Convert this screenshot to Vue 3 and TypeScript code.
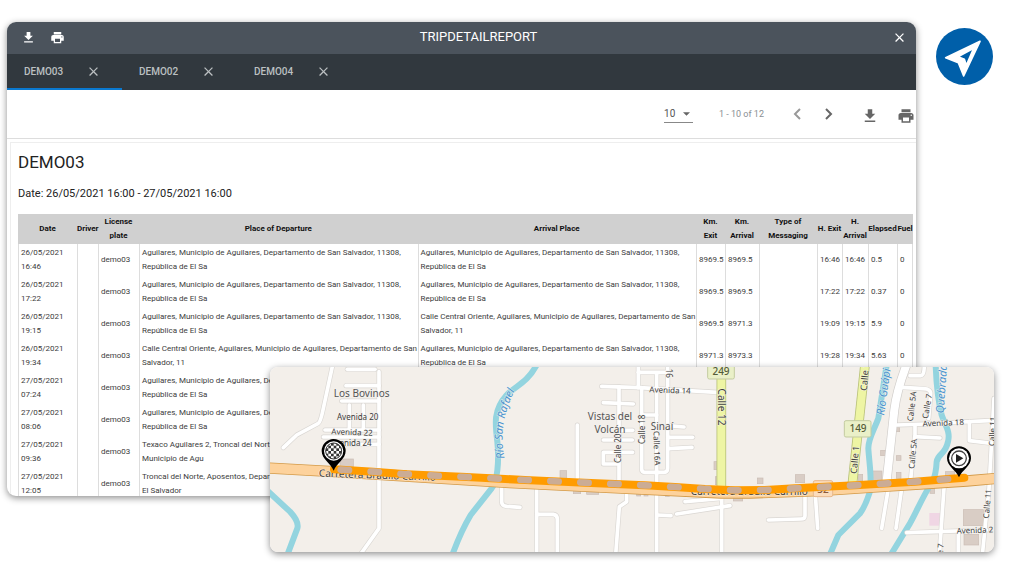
<script setup lang="ts">
import { ref } from 'vue'

interface Trip {
  date: string
  from: string
  to: string
  kmExit: string
  kmArrival: string
  exit: string
  arrival: string
  elapsed: string
}

const tabs = ['DEMO03', 'DEMO02', 'DEMO04']
const active = ref('DEMO03')
const pageSize = ref('10')

const home = 'Aguilares, Municipio de Aguilares, Departamento de San Salvador, 11308, República de El Sa'
const central = 'Calle Central Oriente, Aguilares, Municipio de Aguilares, Departamento de San Salvador, 11'

const trips: Trip[] = [
  { date: '26/05/2021 16:46', from: home, to: home, kmExit: '8969.5', kmArrival: '8969.5', exit: '16:46', arrival: '16:46', elapsed: '0.5' },
  { date: '26/05/2021 17:22', from: home, to: home, kmExit: '8969.5', kmArrival: '8969.5', exit: '17:22', arrival: '17:22', elapsed: '0.37' },
  { date: '26/05/2021 19:15', from: home, to: central, kmExit: '8969.5', kmArrival: '8971.3', exit: '19:09', arrival: '19:15', elapsed: '5.9' },
  { date: '26/05/2021 19:34', from: central, to: home, kmExit: '8971.3', kmArrival: '8973.3', exit: '19:28', arrival: '19:34', elapsed: '5.63' },
  { date: '27/05/2021 07:24', from: home, to: '', kmExit: '', kmArrival: '', exit: '', arrival: '', elapsed: '' },
  { date: '27/05/2021 08:06', from: home, to: '', kmExit: '', kmArrival: '', exit: '', arrival: '', elapsed: '' },
  { date: '27/05/2021 09:36', from: 'Texaco Aguilares 2, Troncal del Norte, Aguilares, San Salvador, 11308, Municipio de Agu', to: '', kmExit: '', kmArrival: '', exit: '', arrival: '', elapsed: '' },
  { date: '27/05/2021 12:05', from: 'Troncal del Norte, Aposentos, Departamento de San Salvador, República de El\u00a0Salvador', to: '', kmExit: '', kmArrival: '', exit: '', arrival: '', elapsed: '' },
]

const download = 'M19 9h-4V3H9v6H5l7 7 7-7zM5 18v2h14v-2H5z'
const print =
  'M19 8H5c-1.66 0-3 1.34-3 3v6h4v4h12v-4h4v-6c0-1.66-1.34-3-3-3zm-3 11H8v-5h8v5zm3-7c-.55 0-1-.45-1-1s.45-1 1-1 1 .45 1 1-.45 1-1 1zm-1-9H6v4h12V3z'
const close = 'M19 6.4 17.6 5 12 10.6 6.4 5 5 6.4 10.6 12 5 17.6 6.4 19 12 13.4 17.6 19 19 17.6 13.4 12z'

const streets = [
  'M218 30L190 160Q182 200 175 205L110 240L70 278',
  'M357 50V520L300 600',
  'M262 43H345', 'M258 92H357', 'M245 138H357', 'M268 150V220', 'M310 150V220', 'M195 225H357', 'M190 246H357', 'M240 268H357',
  'M725 390V440Q725 452 740 454L780 457',
  'M952 210V370', 'M830 395V600', 'M830 478H880Q892 480 892 492V600',
  'M1025 94L1140 98L1370 112', 'M1135 30V98', 'M1145 98V342Q1145 352 1155 352H1212Q1223 352 1223 340V30',
  'M1190 55V600', 'M1135 52H1225', 'M1077 95V240', 'M1077 310V385', 'M1030 143L1120 147', 'M1145 180H1190',
  'M1225 212L1272 216', 'M1225 247H1298', 'M1225 281L1296 277', 'M1030 255H1117', 'M1085 226H1118', 'M1118 292H1030V327H1072',
  'M1100 405V440L1078 455L1067 600', 'M1190 480L1233 482', 'M1275 440L1385 430', 'M1250 477L1410 452', 'M1385 420V600',
  'M1925 97L1990 101Q2014 102 2012 118L2006 190', 'M1950 62H1982Q1993 62 1993 30', 'M1910 210L2000 207L2200 196',
  'M1965 210V245L2040 249', 'M1964 245L1952 375', 'M1885 400L1865 520', 'M1925 400L1908 520', 'M2053 385L2038 600',
  'M1940 533L2180 525', 'M2095 530V600', 'M2202 130L2187 400L2167 600', 'M2128 200V257L2195 265',
  'M1665 405L1673 520', 'M1635 420V482Q1635 492 1622 492L1525 495',
]

const rivers = [
  'M20 405L90 470Q118 500 112 520L80 605',
  'M830 30C800 85 770 90 740 120C700 165 705 205 712 260C718 320 712 380 695 400L632 480Q602 530 575 605',
  'M1880 30L1855 190C1840 230 1825 250 1825 280C1828 330 1838 380 1828 415Q1815 455 1800 475L1735 540L1707 605',
  'M2027 30Q2030 120 2045 180C2055 210 2072 230 2064 260C2056 300 2034 295 2030 320Q2028 360 2018 378C1985 430 1970 470 1950 505L1892 600',
]

const calle12 = 'M1384 30V395'
const calle1 = 'M1815 30L1777 388'
const avenue = 'M1943 20C1920 80 1908 120 1903 165L1880 378'
const highway = 'M20 339L220 350L750 383L1100 400L1384 414H1470L1680 407L1860 395L2120 378L2210 370'
const route =
  'M222 343L340 350L440 358L620 366L795 375L975 383L1155 391L1245 396L1335 402L1425 406L1515 405L1605 400L1785 391L1965 380L2055 373L2113 368'
const routeDash =
  'M242 344L340 350L440 358L620 366L795 375L975 383L1155 391L1245 396L1335 402L1425 406L1515 405L1605 400L1785 391L1965 380L2070 372'

const buildings = [
  [240, 312, 40, 24], [900, 347, 20, 30], [940, 400, 22, 16], [980, 402, 36, 16], [1130, 405, 12, 18], [1152, 405, 12, 18], [1216, 410, 12, 14],
  [1362, 320, 10, 24], [1366, 365, 10, 24], [1420, 418, 28, 20], [1492, 369, 17, 17], [1606, 359, 28, 24], [1794, 358, 14, 20],
  [1838, 348, 28, 28], [1862, 286, 16, 16], [1909, 302, 14, 14], [1909, 352, 14, 18], [1909, 218, 10, 12], [2056, 350, 28, 20],
  [2010, 400, 14, 15], [2110, 464, 60, 48], [2112, 538, 44, 32],
]

const labels = [
  { t: 'Los Bovinos', x: 305, y: 126, s: 30, r: 0, c: 'place' },
  { t: 'Avenida 20', x: 293, y: 194, s: 24, r: 0, c: 'street' },
  { t: 'Avenida 22', x: 276, y: 240, s: 24, r: 2, c: 'street' },
  { t: 'Avenida 24', x: 273, y: 274, s: 24, r: 0, c: 'street' },
  { t: 'Vistas del', x: 1050, y: 196, s: 30, r: 0, c: 'place' },
  { t: 'Volcán', x: 1050, y: 234, s: 30, r: 0, c: 'place' },
  { t: 'Sinaí', x: 1206, y: 224, s: 30, r: 0, c: 'place' },
  { t: 'Avenida 14', x: 1230, y: 114, s: 24, r: 2, c: 'street' },
  { t: '16', x: 1217, y: 55, s: 24, r: 90, c: 'street' },
  { t: 'Calle 20', x: 1083, y: 280, s: 24, r: -90, c: 'street' },
  { t: 'Calle 18', x: 1154, y: 223, s: 24, r: -90, c: 'street' },
  { t: 'Calle 16A', x: 1182, y: 280, s: 24, r: 88, c: 'street' },
  { t: 'Calle 12', x: 1375, y: 156, s: 30, r: 90, c: 'street' },
  { t: 'Calle 1', x: 1824, y: 66, s: 27, r: -85, c: 'street' },
  { t: 'Calle 1', x: 1794, y: 315, s: 27, r: -85, c: 'street' },
  { t: 'Calle 5A', x: 1964, y: 155, s: 24, r: -83, c: 'street' },
  { t: 'Calle 7', x: 2010, y: 155, s: 24, r: -80, c: 'street' },
  { t: 'Calle 5A', x: 1967, y: 297, s: 24, r: -85, c: 'street' },
  { t: 'Avenida 18', x: 2050, y: 212, s: 24, r: -2, c: 'street' },
  { t: 'Calle 11', x: 2190, y: 447, s: 24, r: -85, c: 'street' },
  { t: 'Calle 11', x: 2206, y: 230, s: 24, r: -87, c: 'street' },
  { t: 'Avenida 2', x: 2145, y: 534, s: 24, r: -2, c: 'street' },
  { t: 'Calle 7', x: 2048, y: 603, s: 24, r: -85, c: 'street' },
  { t: 'Río Guápi', x: 1882, y: 112, s: 33, r: -82, c: 'water' },
  { t: 'Quebrada', x: 2056, y: 102, s: 33, r: -86, c: 'water' },
]
</script>

<template>
  <main class="page">
    <section class="window">
      <header class="titlebar">
        <button class="icon-btn" aria-label="Download"><svg viewBox="0 0 24 24"><path :d="download" /></svg></button>
        <button class="icon-btn" aria-label="Print"><svg viewBox="0 0 24 24"><path :d="print" /></svg></button>
        <h1>TRIPDETAILREPORT</h1>
        <button class="icon-btn" aria-label="Close"><svg viewBox="0 0 24 24"><path :d="close" /></svg></button>
      </header>

      <nav class="tabs">
        <div v-for="tab in tabs" :key="tab" class="tab" :class="{ active: tab === active }">
          <button class="tab-name" @click="active = tab">{{ tab }}</button>
          <button class="tab-close" :aria-label="'Close ' + tab"><svg viewBox="0 0 24 24"><path :d="close" /></svg></button>
        </div>
      </nav>

      <div class="toolbar">
        <div class="page-size">
          <select v-model="pageSize" aria-label="Rows per page">
            <option>10</option>
            <option>25</option>
          </select>
          <svg viewBox="0 0 8 4"><path d="M0 0h8L4 4z" /></svg>
        </div>
        <span class="range">1 - 10 of 12</span>
        <div class="pagers">
          <button class="pager prev" aria-label="Previous page"><svg viewBox="0 0 10 12"><path d="M7 1 2 6l5 5" /></svg></button>
          <button class="pager" aria-label="Next page"><svg viewBox="0 0 10 12"><path d="M3 1l5 5-5 5" /></svg></button>
        </div>
        <div class="tools">
          <button class="tool" aria-label="Download report"><svg viewBox="0 0 24 24"><path :d="download" /></svg></button>
          <button class="tool" aria-label="Print report"><svg viewBox="0 0 24 24"><path :d="print" /></svg></button>
        </div>
      </div>

      <article class="report">
        <h2>DEMO03</h2>
        <p>Date: 26/05/2021 16:00 - 27/05/2021 16:00</p>
        <table>
          <colgroup>
            <col class="w-date" /><col class="w-driver" /><col class="w-plate" /><col /><col /><col class="w-km" /><col class="w-km2" />
            <col class="w-type" /><col class="w-exit" /><col class="w-arrival" /><col class="w-elapsed" /><col class="w-fuel" />
          </colgroup>
          <thead>
            <tr>
              <th>Date</th>
              <th>Driver</th>
              <th>License<br />plate</th>
              <th>Place of Departure</th>
              <th>Arrival Place</th>
              <th>Km.<br />Exit</th>
              <th>Km.<br />Arrival</th>
              <th>Type of<br />Messaging</th>
              <th>H. Exit</th>
              <th>H.<br />Arrival</th>
              <th>Elapsed</th>
              <th>Fuel</th>
            </tr>
          </thead>
          <tbody>
            <tr v-for="trip in trips" :key="trip.date">
              <td>{{ trip.date }}</td>
              <td></td>
              <td>demo03</td>
              <td>{{ trip.from }}</td>
              <td>{{ trip.to }}</td>
              <td>{{ trip.kmExit }}</td>
              <td>{{ trip.kmArrival }}</td>
              <td></td>
              <td>{{ trip.exit }}</td>
              <td>{{ trip.arrival }}</td>
              <td>{{ trip.elapsed }}</td>
              <td>0</td>
            </tr>
          </tbody>
        </table>
      </article>
    </section>

    <svg class="logo" viewBox="0 0 171 171" role="img" aria-label="Navigation">
      <circle cx="85.500" cy="85.500" r="85.500" fill="#005fa9" />
      <path
        d="M132 40 29 89l38 15 16 40zM113 61 66 86l19 8 6 18z"
        fill="#fff"
        fill-rule="evenodd"
        stroke="#fff"
        stroke-width="5"
        stroke-linejoin="round"
      />
    </svg>

    <div class="map">
      <svg viewBox="30 36 2172 555" preserveAspectRatio="xMidYMid slice" role="img" aria-label="Trip map">
        <defs>
          <pattern id="flag" x="197" y="264" width="16" height="16" patternUnits="userSpaceOnUse">
            <rect width="16" height="16" fill="#fff" />
            <rect width="8" height="8" fill="#333" />
            <rect x="8" y="8" width="8" height="8" fill="#333" />
          </pattern>
          <path id="san-rafael" d="M735 318C722 250 722 190 768 98" />
        </defs>
        <rect x="30" y="36" width="2172" height="555" fill="#f3efea" />
        <rect x="2008" y="474" width="34" height="38" fill="#f0d6e4" />
        <rect v-for="(b, i) in buildings" :key="i" :x="b[0]" :y="b[1]" :width="b[2]" :height="b[3]" class="building" />
        <path v-for="d in rivers" :key="d" :d="d" class="river" />
        <path v-for="d in streets" :key="d" :d="d" class="casing" />
        <path :d="avenue" class="avenue-casing" />
        <path v-for="d in streets" :key="d" :d="d" class="street-line" />
        <path :d="avenue" class="avenue" />
        <path :d="calle12" class="yellow-casing" /><path :d="calle12" class="yellow" />
        <path :d="calle1" class="yellow-casing" /><path :d="calle1" class="yellow" />
        <path :d="highway" class="highway-casing" /><path :d="highway" class="highway" />
        <rect x="1343" y="24" width="80" height="48" rx="5" class="shield" />
        <rect x="1753" y="197" width="80" height="49" rx="5" class="shield" />
        <rect x="1660" y="377" width="58" height="48" rx="5" class="shield orange" />
        <text x="1383" y="59" class="number">249</text>
        <text x="1794" y="232" class="number">149</text>
        <text x="1689" y="413" class="number brown">32</text>
        <text
          v-for="(l, i) in labels"
          :key="i"
          :class="l.c"
          :font-size="l.s"
          :transform="`translate(${l.x} ${l.y}) rotate(${l.r})`"
        >{{ l.t }}</text>
        <text class="water" font-size="33"><textPath href="#san-rafael" startOffset="50%">Río San Rafael</textPath></text>
        <text class="street" font-size="30" transform="translate(352 371) rotate(2)">Carretera Braulio Carrillo</text>
        <text class="street" font-size="30" transform="translate(1468 420)">Carretera Braulio Carrillo</text>
        <path :d="route" class="route" />
        <path :d="routeDash" class="route-dash" />
        <path d="M221 347C212 325 185 312 185 288a36 36 0 1 1 72 0C257 312 230 325 221 347z" />
        <circle cx="221" cy="288" r="29" fill="#fff" />
        <circle cx="221" cy="288" r="24" fill="url(#flag)" stroke="#333" stroke-width="3" />
        <path d="M2097 367C2088 345 2061 334 2061 310a36 36 0 1 1 72 0C2133 334 2106 345 2097 367z" />
        <circle cx="2097" cy="310" r="30" fill="#fff" />
        <circle cx="2097" cy="310" r="22" fill="#fff" stroke="#444" stroke-width="4" />
        <path d="M2088 297v26l22-13z" fill="#222" />
      </svg>
    </div>
  </main>
</template>

<style>
body {
  margin: 0;
  background: #fff;
}
</style>

<style scoped>
* {
  box-sizing: border-box;
}
.page {
  position: relative;
  display: flex;
  align-items: flex-start;
  gap: 20px;
  height: 100vh;
  padding: 22px 31px 80px 7px;
  overflow: hidden;
  background: #fff;
  font-family: Roboto, 'Liberation Sans', sans-serif;
}
button {
  display: flex;
  align-items: center;
  justify-content: center;
  padding: 0;
  border: 0;
  background: none;
  color: inherit;
  font: inherit;
  cursor: pointer;
}
button svg {
  fill: currentColor;
}
.window {
  flex: 1;
  min-width: 0;
  height: 100%;
  overflow: hidden;
  border-radius: 9px;
  background: #fff;
  box-shadow: 0 2px 7px rgba(0, 0, 0, 0.45);
}
.titlebar {
  display: flex;
  align-items: center;
  height: 32px;
  padding: 0 2px 2px 7px;
  background: #4b535c;
  color: #fff;
}
.icon-btn {
  width: 29px;
  height: 29px;
}
.icon-btn svg {
  width: 15px;
  height: 15px;
}
h1 {
  flex: 1;
  margin: 0;
  font-size: 13px;
  font-weight: 400;
  line-height: 28px;
  text-align: center;
}
.tabs {
  display: flex;
  height: 36px;
  background: #31383e;
  color: #bcc0c2;
}
.tab {
  display: flex;
  align-items: center;
  width: 115px;
  padding-left: 17px;
  border-bottom: 2px solid transparent;
}
.tab.active {
  border-color: #0a79d0;
}
.tab-name {
  font-size: 10px;
  font-weight: 500;
}
.tab-close {
  width: 20px;
  height: 20px;
  margin-left: 20px;
}
.tab-close svg {
  width: 15px;
  height: 15px;
}
.toolbar {
  display: flex;
  align-items: center;
  justify-content: flex-end;
  height: 49px;
  border-bottom: 1px solid #ddd;
  color: #666;
}
.page-size {
  display: flex;
  align-items: center;
  width: 29px;
  margin-right: 26px;
  border-bottom: 1px solid #888;
}
.page-size select {
  flex: 1;
  min-width: 0;
  height: 16px;
  padding: 0;
  border: 0;
  appearance: none;
  background: none;
  color: #555;
  font: 10px Roboto, sans-serif;
}
.page-size svg {
  width: 7px;
  height: 4px;
  margin-right: 3px;
  fill: #666;
}
.range {
  margin-right: 24px;
  color: #8a8f93;
  font-size: 9px;
}
.pagers {
  display: flex;
  gap: 10px;
  margin-right: 23px;
}
.pager {
  width: 20px;
  height: 20px;
}
.pager.prev {
  color: #999;
}
.pager svg {
  width: 10px;
  height: 12px;
  fill: none;
  stroke: currentColor;
  stroke-width: 2;
}
.tools {
  display: flex;
  gap: 18px;
  padding: 4px 1px 0 0;
}
.tool {
  width: 18px;
  height: 18px;
}
.tool svg {
  width: 18px;
  height: 18px;
}
.report {
  margin: 3px 0 0 3px;
  padding: 9px 3px 0 7px;
  border: 1px solid #eee;
  border-right: 0;
}
h2 {
  margin: 0;
  color: #222;
  font-size: 17px;
  font-weight: 400;
  line-height: 20px;
}
p {
  margin: 15px 0 13px;
  color: #222;
  font-size: 11px;
  line-height: 14px;
}
table {
  width: 100%;
  border-collapse: separate;
  border-spacing: 0;
  table-layout: fixed;
  color: #3c3c3c;
  font-size: 8px;
  line-height: 14px;
}
.w-date { width: 59px; }
.w-driver { width: 21px; }
.w-plate { width: 41px; }
.w-km { width: 29px; }
.w-km2 { width: 34px; }
.w-type { width: 58px; }
.w-exit { width: 25px; }
.w-arrival { width: 26px; }
.w-elapsed { width: 29px; }
.w-fuel { width: 16px; }
th {
  height: 30px;
  padding: 0;
  background: #d0d0d0;
  color: #111;
  font-weight: 700;
  white-space: nowrap;
}
td {
  height: 32px;
  padding: 2px 0 2px 2px;
  border-left: 1px solid #ddd;
}
td:last-child {
  border-right: 1px solid #ddd;
}
.logo {
  width: 57px;
  height: 57px;
  margin-top: 6px;
}
.map {
  position: absolute;
  right: 30px;
  bottom: 24px;
  left: 270px;
  height: 185px;
  overflow: hidden;
  border-radius: 8px;
  box-shadow: 0 2px 7px rgba(0, 0, 0, 0.45);
}
.map svg {
  display: block;
  width: 100%;
  height: 100%;
}
.map path {
  stroke-linejoin: round;
}
.building {
  fill: #d9cdc5;
  stroke: #cbbdb4;
  stroke-width: 2px;
}
.river,
.casing,
.street-line,
.avenue,
.avenue-casing,
.yellow,
.yellow-casing,
.highway,
.highway-casing,
.route,
.route-dash {
  fill: none;
  stroke-linecap: round;
}
.river { stroke: #93d4df; stroke-width: 18px; }
.casing { stroke: #dad7d3; stroke-width: 15px; }
.street-line { stroke: #fff; stroke-width: 11px; }
.avenue-casing { stroke: #d0cdca; stroke-width: 28px; stroke-linecap: butt; }
.avenue { stroke: #fff; stroke-width: 24px; stroke-linecap: butt; }
.yellow-casing { stroke: #b9c27a; stroke-width: 29px; stroke-linecap: butt; }
.yellow { stroke: #eef5a4; stroke-width: 24px; stroke-linecap: butt; }
.highway-casing { stroke: #d39a48; stroke-width: 34px; }
.highway { stroke: #fdd29c; stroke-width: 29px; }
.route { stroke: #ff9c00; stroke-width: 24px; }
.route-dash { stroke: #cbac95; stroke-width: 20px; stroke-dasharray: 25 65; }
.shield { fill: #eaf0c8; stroke: #c3cba0; stroke-width: 3px; }
.shield.orange { fill: #fbdcbc; stroke: #e8b88c; }
.map text {
  font-family: 'Noto Sans', sans-serif;
  text-anchor: middle;
}
.number { fill: #555d38; font-size: 30px; font-weight: 500; }
.number.brown { fill: #8a5a3c; }
.place,
.street,
.water {
  paint-order: stroke;
  stroke: #f5f2ee;
  stroke-opacity: 0.6;
  stroke-width: 4px;
}
.place { fill: #555; }
.street { fill: #3c3c3c; }
.water { fill: #4a94d0; font-style: italic; }
</style>
